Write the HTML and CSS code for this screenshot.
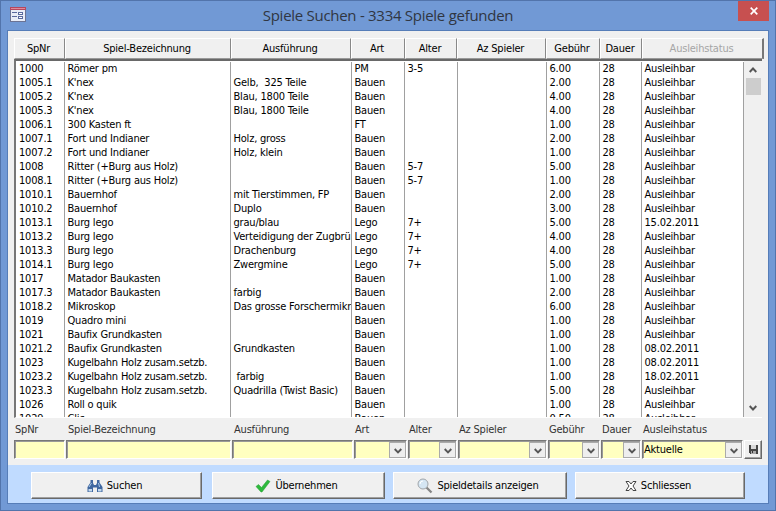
FILE: index.html
```html
<!DOCTYPE html>
<html lang="de">
<head>
<meta charset="utf-8">
<title>Spiele Suchen</title>
<link rel="stylesheet" href="styles.css">
</head>
<body>
<div class="window">
  <header class="titlebar">
    <svg class="form-icon" width="16" height="15" viewBox="0 0 16 15" shape-rendering="crispEdges"><rect width="16" height="15" fill="#6b7394"/><rect width="16" height="3" fill="#b5475f"/><rect x="1" y="1" width="14" height="1" fill="#e08a9b"/><rect x="1" y="3" width="14" height="11" fill="#e9edf8"/><path d="M2 5h5v1H2zM2 9h5v1H2zM8 5h5v3H8zM8 9h5v3H8z" fill="#5a6a9e"/><path d="M9 6h3v1H9zM9 10h3v1H9z" fill="#fff"/></svg>
    <h1>Spiele Suchen - 3334 Spiele gefunden</h1>
    <button class="close" aria-label="Schliessen"><svg width="8" height="8" viewBox="0 0 8 8"><path d="M.7.7l6.6 6.6M7.3.7L.7 7.3" stroke="#fff" stroke-width="1.7"/></svg></button>
  </header>
  <main class="client">
    <div class="headers">
      <span>SpNr</span><span>Spiel-Bezeichnung</span><span>Ausführung</span><span>Art</span><span>Alter</span><span>Az Spieler</span><span>Gebühr</span><span>Dauer</span><span class="off">Ausleihstatus</span>
    </div>
    <div class="list">
      <table>
        <colgroup><col class="c1"><col class="c2"><col class="c3"><col class="c4"><col class="c5"><col class="c6"><col class="c7"><col class="c8"><col class="c9"></colgroup>
        <tbody>
        <tr><td>1000<td>Römer pm<td><td>PM<td>3-5<td><td>6.00<td>28<td>Ausleihbar
        <tr><td>1005.1<td>K'nex<td>Gelb,&nbsp; 325 Teile<td>Bauen<td><td><td>2.00<td>28<td>Ausleihbar
        <tr><td>1005.2<td>K'nex<td>Blau, 1800 Teile<td>Bauen<td><td><td>4.00<td>28<td>Ausleihbar
        <tr><td>1005.3<td>K'nex<td>Blau, 1800 Teile<td>Bauen<td><td><td>4.00<td>28<td>Ausleihbar
        <tr><td>1006.1<td>300 Kasten ft<td><td>FT<td><td><td>1.00<td>28<td>Ausleihbar
        <tr><td>1007.1<td>Fort und Indianer<td>Holz, gross<td>Bauen<td><td><td>2.00<td>28<td>Ausleihbar
        <tr><td>1007.2<td>Fort und Indianer<td>Holz, klein<td>Bauen<td><td><td>1.00<td>28<td>Ausleihbar
        <tr><td>1008<td>Ritter (+Burg aus Holz)<td><td>Bauen<td>5-7<td><td>5.00<td>28<td>Ausleihbar
        <tr><td>1008.1<td>Ritter (+Burg aus Holz)<td><td>Bauen<td>5-7<td><td>1.00<td>28<td>Ausleihbar
        <tr><td>1010.1<td>Bauernhof<td>mit Tierstimmen, FP<td>Bauen<td><td><td>2.00<td>28<td>Ausleihbar
        <tr><td>1010.2<td>Bauernhof<td>Duplo<td>Bauen<td><td><td>3.00<td>28<td>Ausleihbar
        <tr><td>1013.1<td>Burg lego<td>grau/blau<td>Lego<td>7+<td><td>5.00<td>28<td>15.02.2011
        <tr><td>1013.2<td>Burg lego<td>Verteidigung der Zugbrü<td>Lego<td>7+<td><td>4.00<td>28<td>Ausleihbar
        <tr><td>1013.3<td>Burg lego<td>Drachenburg<td>Lego<td>7+<td><td>4.00<td>28<td>Ausleihbar
        <tr><td>1014.1<td>Burg lego<td>Zwergmine<td>Lego<td>7+<td><td>5.00<td>28<td>Ausleihbar
        <tr><td>1017<td>Matador Baukasten<td><td>Bauen<td><td><td>1.00<td>28<td>Ausleihbar
        <tr><td>1017.3<td>Matador Baukasten<td>farbig<td>Bauen<td><td><td>2.00<td>28<td>Ausleihbar
        <tr><td>1018.2<td>Mikroskop<td>Das grosse Forschermikr<td>Bauen<td><td><td>6.00<td>28<td>Ausleihbar
        <tr><td>1019<td>Quadro mini<td><td>Bauen<td><td><td>1.00<td>28<td>Ausleihbar
        <tr><td>1021<td>Baufix Grundkasten<td><td>Bauen<td><td><td>1.00<td>28<td>Ausleihbar
        <tr><td>1021.2<td>Baufix Grundkasten<td>Grundkasten<td>Bauen<td><td><td>1.00<td>28<td>08.02.2011
        <tr><td>1023<td>Kugelbahn Holz zusam.setzb.<td><td>Bauen<td><td><td>1.00<td>28<td>08.02.2011
        <tr><td>1023.2<td>Kugelbahn Holz zusam.setzb.<td>&nbsp;farbig<td>Bauen<td><td><td>1.00<td>28<td>18.02.2011
        <tr><td>1023.3<td>Kugelbahn Holz zusam.setzb.<td>Quadrilla (Twist Basic)<td>Bauen<td><td><td>5.00<td>28<td>Ausleihbar
        <tr><td>1026<td>Roll o quik<td><td>Bauen<td><td><td>1.00<td>28<td>Ausleihbar
        <tr><td>1029<td>Clic<td><td>Bauen<td><td><td>0.50<td>28<td>Ausleihbar
        </tbody>
      </table>
      <div class="scrollbar">
        <svg width="8" height="6" viewBox="0 0 8 6"><path d="M.7 5L4 1.5 7.3 5" fill="none" stroke="#555" stroke-width="1.9"/></svg>
        <div class="thumb"></div>
        <svg class="down" width="8" height="6" viewBox="0 0 8 6"><path d="M.7 1L4 4.5 7.3 1" fill="none" stroke="#555" stroke-width="1.9"/></svg>
      </div>
    </div>
    <div class="filters">
      <label>SpNr</label><label class="f2">Spiel-Bezeichnung</label><label class="f2">Ausführung</label><label>Art</label><label>Alter</label><label>Az Spieler</label><label>Gebühr</label><label>Dauer</label><label>Ausleihstatus</label><span></span>
      <div class="field"></div><div class="field"></div><div class="field"></div>
      <div class="field"><i class="drop"><svg width="8" height="6" viewBox="0 0 8 6"><path d="M.7 1L4 4.3 7.3 1" /></svg></i></div>
      <div class="field"><i class="drop"><svg width="8" height="6" viewBox="0 0 8 6"><path d="M.7 1L4 4.3 7.3 1" /></svg></i></div>
      <div class="field"><i class="drop"><svg width="8" height="6" viewBox="0 0 8 6"><path d="M.7 1L4 4.3 7.3 1" /></svg></i></div>
      <div class="field"><i class="drop"><svg width="8" height="6" viewBox="0 0 8 6"><path d="M.7 1L4 4.3 7.3 1" /></svg></i></div>
      <div class="field"><i class="drop"><svg width="8" height="6" viewBox="0 0 8 6"><path d="M.7 1L4 4.3 7.3 1" /></svg></i></div>
      <div class="field"><b>Aktuelle</b><i class="drop"><svg width="8" height="6" viewBox="0 0 8 6"><path d="M.7 1L4 4.3 7.3 1" /></svg></i></div>
      <button class="save" aria-label="Speichern"><svg width="9" height="9" viewBox="0 0 9 9" shape-rendering="crispEdges"><path d="M0 0h9v9H1L0 8z" fill="#444"/><path d="M2 0h5v4H2z" fill="#d8d8d8"/><path d="M2 6h5v3H2z" fill="#aaa"/><path d="M3 6h1v2H3z" fill="#333"/></svg></button>
    </div>
    <footer class="actions">
      <button class="b1"><svg width="16" height="16" viewBox="0 0 16 16"><path d="M3.500 2h2.500v3l1 2h2l1-2V2h2.500v2.500L15.500 9v5h-5.500V9.500H6V14H.5V9L3.500 4.500z" fill="#3f67a0"/><path d="M2 9l2.500-4M11.500 5l1 4" stroke="#a9c8e8"/><path d="M1.500 11h3.500v2.500H1.500zM11 11h3.500v2.500H11z" fill="#c3d9ee"/></svg>Suchen</button>
      <button class="b2"><svg width="16" height="16" viewBox="0 0 16 16"><path d="M1 8.500l2.500-2L6.500 9.500 12.500 2l2.500 1.500L7 14H6z" fill="#2dba3c" stroke="#249a33" stroke-width=".5"/></svg>Übernehmen</button>
      <button class="b3"><svg width="16" height="16" viewBox="0 0 16 16"><path d="M9.500 9.500l5 5" stroke="#858585" stroke-width="2.300"/><circle cx="6" cy="6" r="5" fill="#d5e6f3" stroke="#a0a5aa"/><path d="M3 6a3 3 0 0 1 3-3" fill="none" stroke="#fff"/></svg>Spieldetails anzeigen</button>
      <button class="b4"><svg width="12" height="10" viewBox="0 0 12 10"><path d="M1 .5h3l2 2.500 2-2.500h3L8 5l3 4.500H8L6 7 4 9.500H1L4 5z" fill="#fff" stroke="#444" stroke-width="1"/></svg>Schliessen</button>
    </footer>
  </main>
</div>
</body>
</html>
```
FILE: styles.css
```css
* { box-sizing: border-box; }
body { margin: 0; font: 11px/14px "DejaVu Sans Condensed", "DejaVu Sans", sans-serif; font-stretch: condensed; letter-spacing: -.2px; color: #000; }
button { font: inherit; letter-spacing: inherit; color: inherit; padding: 0; }
.window { width: 776px; height: 511px; border: 1px solid #5274ab; background: #7199d5; padding: 0 6px 6px; }
.titlebar { height: 29px; display: flex; align-items: flex-start; }
.form-icon { margin: 6px 0 0 3px; flex: none; }
.titlebar h1 { flex: 1; margin: 4px 0 0 12px; text-align: center; font: 15px/20px "Open Sans", sans-serif; letter-spacing: -.28px; color: #303642; }
.close { width: 31px; height: 20px; border: 0; background: #c75050; display: flex; align-items: center; justify-content: center; }
.client { height: 474px; border: 1px solid #567db8; background: #f0f0f0; padding-top: 7px; }
.headers { display: grid; grid-template-columns: 51px 166px 120px 54px 52px 89px 54px 42px 122px; height: 21px; margin-left: 6px; width: 750px; }
.headers span { border-top: 1px solid #fff; border-left: 1px solid #fff; border-right: 1px solid #888; border-bottom: 1px solid #999; text-align: center; line-height: 19px; padding: 1px 2px 0 0; line-height: 18px; }
.headers .off { color: #a5a5a5; border-right: 2px solid #777; }
.list { height: 359px; margin-left: 6px; width: 748px; border-top: 2px solid #696969; border-left: 2px solid #777; border-bottom: 1px solid #fff; background: #fff; display: flex; overflow: hidden; }
table { width: 727px; height: 364px; flex: none; table-layout: fixed; border-collapse: collapse; margin-top: 1px; }
td { height: 14px; padding: 0 0 0 3px; white-space: nowrap; overflow: hidden; border-right: 1px solid #a0a0a0; line-height: 14px; }
.scrollbar { width: 19px; flex: none; background: #f0f0f0; display: flex; flex-direction: column; align-items: center; padding-top: 6px; }
.thumb { width: 15px; height: 17px; background: #cdcdcd; margin-top: 5px; }
.down { margin-top: auto; margin-bottom: 6px; }
.c1 { width: 48px; } .c2 { width: 166px; } .c3 { width: 121px; } .c4 { width: 53px; } .c5 { width: 53px; } .c6 { width: 89px; } .c7 { width: 53px; } .c8 { width: 42px; } .c9 { width: 102px; }
.filters { height: 47px; margin-left: 6px; display: grid; grid-template-columns: 52px 166px 122px 54px 50px 90px 53px 41px 102px 18px; grid-template-rows: 22px 19px; }
.filters label { line-height: 14px; padding: 5px 0 0 1px; color: #333; white-space: nowrap; }
.filters .f2 { padding-left: 2px; }
.field { display: flex; justify-content: flex-end; margin-right: 1px; border: 1px solid #777; border-right-color: #fff; border-bottom-color: #fff; box-shadow: inset 1px 1px #999; background: #ffffc0; }
.field b { flex: 1; font-weight: normal; padding-left: 1px; line-height: 17px; }
.drop { width: 17px; margin-top: 1px; border: 1px solid #aaa; background: #eee; display: flex; align-items: center; justify-content: center; padding-top: 2px; }
.drop path { fill: none; stroke: #555; stroke-width: 1.9; }
.save, .actions button { border: 1px solid #fff; border-right: 1px solid #696969; border-bottom: 1px solid #696969; background: #f0f0f0; box-shadow: inset -1px -1px #a0a0a0; display: flex; align-items: center; justify-content: center; }
.actions { height: 38px; background: #c0dbff; padding: 7px 0 0 23px; display: flex; }
.actions button { height: 27px; gap: 4px; padding-right: 4px; }
.b1 { width: 171px; margin-right: 10px; } .b2 { width: 173px; margin-right: 8px; } .b3 { width: 174px; margin-right: 8px; } .b4 { width: 170px; }
```
